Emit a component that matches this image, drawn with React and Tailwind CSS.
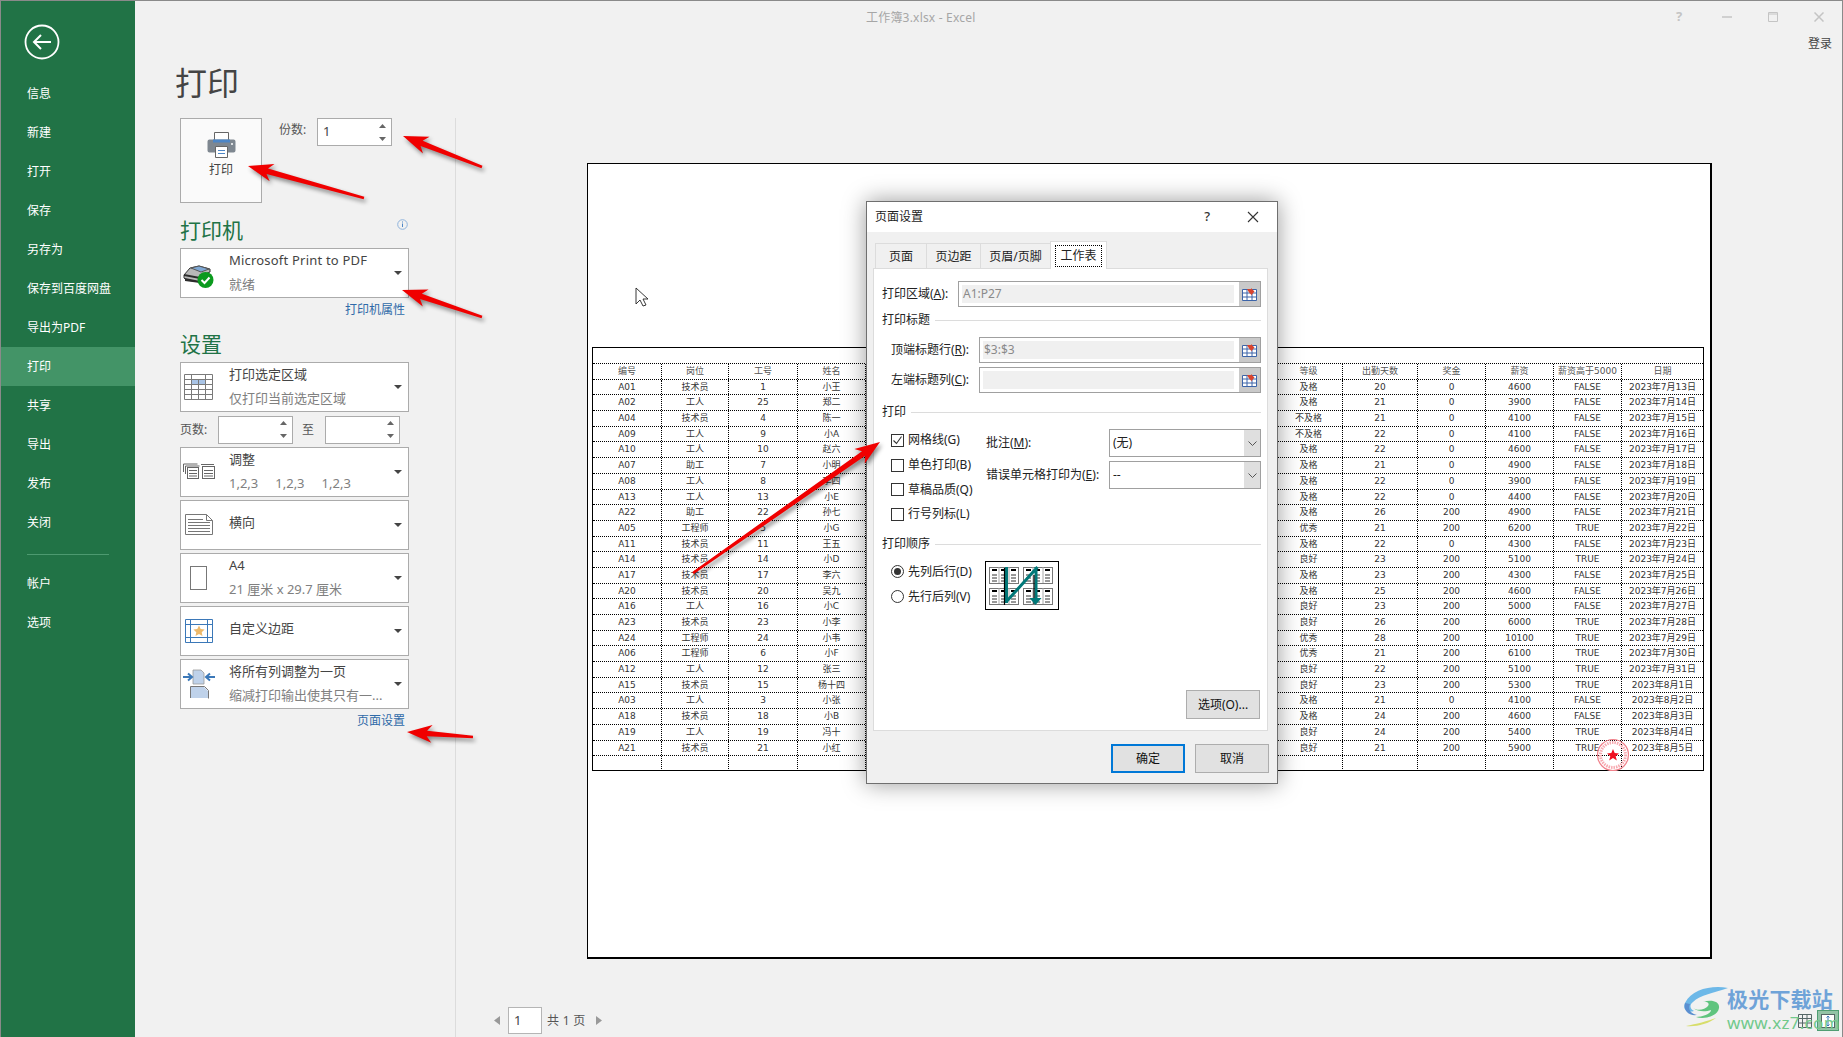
import React from 'react';

const navTop = ['信息', '新建', '打开', '保存', '另存为', '保存到百度网盘', '导出为PDF', '打印', '共享', '导出', '发布', '关闭'];
const navBottom = ['帐户', '选项'];

const sheetHead = ['编号', '岗位', '工号', '姓名', '等级', '出勤天数', '奖金', '薪资', '薪资高于5000', '日期'];
const sheetRows = [
  ['A01', '技术员', '1', '小王', '及格', '20', '0', '4600', 'FALSE', '2023年7月13日'],
  ['A02', '工人', '25', '郑二', '及格', '21', '0', '3900', 'FALSE', '2023年7月14日'],
  ['A04', '技术员', '4', '陈一', '不及格', '21', '0', '4100', 'FALSE', '2023年7月15日'],
  ['A09', '工人', '9', '小A', '不及格', '22', '0', '4100', 'FALSE', '2023年7月16日'],
  ['A10', '工人', '10', '赵六', '及格', '22', '0', '4600', 'FALSE', '2023年7月17日'],
  ['A07', '助工', '7', '小明', '及格', '21', '0', '4900', 'FALSE', '2023年7月18日'],
  ['A08', '工人', '8', '李四', '及格', '22', '0', '3900', 'FALSE', '2023年7月19日'],
  ['A13', '工人', '13', '小E', '及格', '22', '0', '4400', 'FALSE', '2023年7月20日'],
  ['A22', '助工', '22', '孙七', '及格', '26', '200', '4900', 'FALSE', '2023年7月21日'],
  ['A05', '工程师', '5', '小G', '优秀', '21', '200', '6200', 'TRUE', '2023年7月22日'],
  ['A11', '技术员', '11', '王五', '及格', '22', '0', '4300', 'FALSE', '2023年7月23日'],
  ['A14', '技术员', '14', '小D', '良好', '23', '200', '5100', 'TRUE', '2023年7月24日'],
  ['A17', '技术员', '17', '李六', '及格', '23', '200', '4300', 'FALSE', '2023年7月25日'],
  ['A20', '技术员', '20', '吴九', '及格', '25', '200', '4600', 'FALSE', '2023年7月26日'],
  ['A16', '工人', '16', '小C', '良好', '23', '200', '5000', 'FALSE', '2023年7月27日'],
  ['A23', '技术员', '23', '小李', '良好', '26', '200', '6000', 'TRUE', '2023年7月28日'],
  ['A24', '工程师', '24', '小韦', '优秀', '28', '200', '10100', 'TRUE', '2023年7月29日'],
  ['A06', '工程师', '6', '小F', '优秀', '21', '200', '6100', 'TRUE', '2023年7月30日'],
  ['A12', '工人', '12', '张三', '良好', '22', '200', '5100', 'TRUE', '2023年7月31日'],
  ['A15', '技术员', '15', '杨十四', '良好', '23', '200', '5300', 'TRUE', '2023年8月1日'],
  ['A03', '工人', '3', '小张', '及格', '21', '0', '4100', 'FALSE', '2023年8月2日'],
  ['A18', '技术员', '18', '小B', '及格', '24', '200', '4600', 'FALSE', '2023年8月3日'],
  ['A19', '工人', '19', '冯十', '良好', '24', '200', '5400', 'TRUE', '2023年8月4日'],
  ['A21', '技术员', '21', '小红', '良好', '21', '200', '5900', 'TRUE', '2023年8月5日'],
  ['', '', '', '', '', '', '', '', '', ''],
];

// red annotation arrows, tip first then tail, in page pixels
const arrows = [
  [403, 136, 482, 167],
  [248, 166, 364, 198],
  [402, 290, 482, 317],
  [407, 732, 473, 737],
  [880, 442, 693, 573],
];

const arrowPoints = ([tx, ty, ex, ey]) => {
  const len = Math.hypot(ex - tx, ey - ty);
  const ux = (ex - tx) / len;
  const uy = (ey - ty) / len;
  const nx = -uy;
  const ny = ux;
  const pt = (along, side) => `${tx + ux * along + nx * side},${ty + uy * along + ny * side}`;
  return [pt(0, 0), pt(25, 9), pt(20, 2.8), pt(len, 1.3), pt(len, -1.3), pt(20, -2.8), pt(25, -9)].join(' ');
};

const Caret = () => (
  <svg width="8" height="4" viewBox="0 0 8 4" className="flex-none">
    <path d="M0 0h8L4 4z" fill="#444" />
  </svg>
);

const Spinner = ({ value, className }) => (
  <div className={`flex h-[28px] w-[75px] flex-none items-center justify-between border border-[#ababab] bg-white pl-[5px] pr-[5px] text-[13px] text-[#444] ${className || ''}`}>
    <span>{value}</span>
    <div className="flex flex-col gap-[9px]">
      <svg width="7" height="4" viewBox="0 0 7 4"><path d="M3.5 0L7 4H0z" fill="#666" /></svg>
      <svg width="7" height="4" viewBox="0 0 7 4"><path d="M0 0h7L3.5 4z" fill="#666" /></svg>
    </div>
  </div>
);

const Picker = ({ icon, title, sub }) => (
  <div className="flex h-[50px] w-[229px] flex-none items-center border border-[#ababab] bg-white">
    <svg width="48" height="48" viewBox="0 0 48 48" fill="none" className="flex-none">{icon}</svg>
    <div className={`flex min-w-0 flex-1 flex-col ${sub ? 'gap-[6px] pb-[3px]' : 'pb-[7px]'}`}>
      <div className="whitespace-nowrap text-[13px] leading-[18px] text-[#444]">{title}</div>
      {sub && <div className="whitespace-nowrap text-[13px] leading-[18px] text-[#808080]">{sub}</div>}
    </div>
    <div className="pr-[6px]"><Caret /></div>
  </div>
);

const PrinterGlyph = (
  <>
    <path d="M3 26l6-7 9-2 11 3v3l-10 4v6L5 31l-2-2z" fill="#b8b8b8" stroke="#333" />
    <path d="M10 19l8-2 10 3-8 3z" fill="#7fa8d4" stroke="#555" />
    <path d="M3 25l16 3v2L3 27zM4 29l15 3v2L4 32z" fill="#2c2c2c" />
    <circle cx="24.5" cy="31" r="8" fill="#0b9a1e" />
    <path d="M20.500 31l3 3 5-5.500" stroke="#fff" strokeWidth="2" />
  </>
);

const TableGlyph = (
  <g stroke="#7a7a7a">
    <rect x="10.500" y="16" width="14" height="5" fill="#a9c4e6" stroke="none" />
    <path d="M3.500 11.500h28v25h-28zM3.500 16.500h28M3.500 21.500h28M3.500 26.500h28M3.500 31.500h28M10.500 11.500v25M17.500 16.500v20M24.500 11.500v25" />
  </g>
);

const CollateGlyph = (
  <g stroke="#666">
    <path d="M2.500 24v-8h14M4.500 26v-8h14" />
    <rect x="6.500" y="19.500" width="11" height="11" fill="#fff" />
    <path d="M8 22.500h8M8 25.500h8M8 28h8" />
    <path d="M20 16.500h13" />
    <rect x="21.500" y="18.500" width="12" height="12" fill="#fff" />
    <path d="M23 22.500h9M23 25.500h9M23 28h9" />
  </g>
);

const LandscapeGlyph = (
  <g stroke="#777">
    <path d="M4.500 13.500h21l6 6v14h-27z" fill="#fff" />
    <path d="M25.500 13.500v6h6M7 18.500h15M7 21.500h22M7 24.500h22M7 27.500h22M7 30.500h22" />
  </g>
);

const SheetGlyph = <rect x="9.500" y="12.500" width="16" height="23" stroke="#777" fill="#fff" />;

const MarginGlyph = (
  <g>
    <path d="M4.500 12.500h27v23h-27zM9.500 12.500v23M26.500 12.500v23M4.500 17.500h27M4.500 30.500h27" stroke="#3b78b8" />
    <path d="M18 18.500l1.700 3.600 3.900.5-2.900 2.600.8 3.900-3.500-2-3.500 2 .8-3.900-2.900-2.600 3.900-.5z" fill="#eeb96a" />
  </g>
);

const FitGlyph = (
  <g>
    <path d="M12 10h8l3 3v11H12z" fill="#bfd2ea" stroke="#999" strokeWidth="0.8" />
    <path d="M9.500 38V26.500h14l4 4v8" fill="none" stroke="#777" />
    <path d="M10 27h13l4 4v7H10z" fill="#bfd2ea" />
    <path d="M2 17h8M7 13.500l4 3.500-4 3.500M34 17h-8M29 13.500l-4 3.500 4 3.500" stroke="#3b78b8" strokeWidth="2" />
  </g>
);

const RefEdit = () => (
  <div className="flex h-full w-[21px] flex-none items-center justify-center bg-[#c9c9c9]">
    <svg width="15" height="13" viewBox="0 0 15 13" fill="none">
      <rect x=".5" y="1.500" width="14" height="11" fill="#fff" />
      <path d="M.5 1.500h14v11H.5zM.5 5h14M.5 9h14M5 1.500v11M10 1.500v11" stroke="#3c64a8" />
      <path d="M5 1h4V0l3.500 3.500L9 7.500V6.500L7 4.500z" fill="#d8442e" />
    </svg>
  </div>
);

const RefInput = ({ value }) => (
  <div className="flex h-[26px] flex-1 items-stretch border border-[#a0a0a0] bg-white">
    <div className="my-[3px] ml-[3px] mr-[5px] flex flex-1 items-center bg-[#f0f0f0] pl-[1px] text-[12px] text-[#8a8a8a]">{value}</div>
    <RefEdit />
  </div>
);

const GroupTitle = ({ children, className }) => (
  <div className={`flex h-[24px] flex-none items-center gap-[5px] pt-[2px] text-[12px] text-[#222] ${className || ''}`}>
    <span>{children}</span>
    <div className="h-px flex-1 bg-[#dcdcdc]" />
  </div>
);

const Check = ({ label, checked }) => (
  <div className="flex h-[24.7px] items-center gap-[4px] text-[12px] text-[#222]">
    <div className="flex h-[13px] w-[13px] flex-none items-center justify-center border border-[#333] bg-white">
      {checked && (
        <svg width="11" height="11" viewBox="0 0 11 11" fill="none"><path d="M1.500 5.500l3 3 5-7" stroke="#333" strokeWidth="1.100" /></svg>
      )}
    </div>
    <span className="whitespace-nowrap">{label}</span>
  </div>
);

const Radio = ({ label, checked }) => (
  <div className="flex h-[25px] items-center gap-[4px] text-[12px] text-[#222]">
    <div className="flex h-[13px] w-[13px] flex-none items-center justify-center rounded-full border border-[#333] bg-white">
      {checked && <div className="h-[7px] w-[7px] rounded-full bg-[#333]" />}
    </div>
    <span className="whitespace-nowrap">{label}</span>
  </div>
);

const SelectBox = ({ value }) => (
  <div className="flex h-[28px] w-[152px] flex-none items-stretch border border-[#a0a0a0] bg-white text-[12px] text-[#222]">
    <div className="flex flex-1 items-center pl-[3px]">{value}</div>
    <div className="flex w-[16px] items-center justify-center bg-[#dfdfdf]">
      <svg width="9" height="5" viewBox="0 0 9 5" fill="none"><path d="M.5.500l4 4 4-4" stroke="#555" /></svg>
    </div>
  </div>
);

const DialogButton = ({ children, primary }) => (
  <div className={`flex h-[29px] w-[74px] items-center justify-center bg-[#e1e1e1] text-[12px] text-[#111] ${primary ? 'border-2 border-[#0078d7]' : 'border border-[#adadad]'}`}>
    {children}
  </div>
);

const miniPage = (x, y) => (
  <g key={`${x}-${y}`} fill="none" stroke="#777">
    <rect x={x + 0.5} y={y + 0.5} width="29" height="16" />
    <path d={`M${x + 10} ${y} v16 M${x + 20} ${y} v16`} stroke="#aaa" />
    <path d={`M${x + 3} ${y + 3} h5 M${x + 12} ${y + 3} h5 M${x + 22} ${y + 3} h5`} stroke="#000" strokeWidth="2" />
    <path d={`M${x + 3} ${y + 8} h5 M${x + 12} ${y + 8} h5 M${x + 22} ${y + 8} h5 M${x + 3} ${y + 11} h5 M${x + 12} ${y + 11} h5 M${x + 22} ${y + 11} h5 M${x + 3} ${y + 14} h5 M${x + 12} ${y + 14} h5 M${x + 22} ${y + 14} h5`} stroke="#333" />
  </g>
);

const OrderPicture = () => (
  <svg width="74" height="49" viewBox="0 0 74 49" className="flex-none bg-white outline outline-1 -outline-offset-1 outline-black">
    {miniPage(4, 6)}
    {miniPage(38, 6)}
    {miniPage(4, 27)}
    {miniPage(38, 27)}
    <path d="M21.500 6v36M52.500 6L21 41M51 6v35" stroke="#007878" strokeWidth="3" fill="none" />
    <path d="M19.500 7v37M49 14v29" stroke="#000" strokeWidth="1.200" />
    <path d="M44.500 37h12l-6 7z" fill="#007878" />
  </svg>
);

const PageSetupDialog = () => (
  <div className="absolute left-[865px] top-[200px] flex h-[583px] w-[412px] flex-col border border-[#6f6f6f] bg-[#f0f0f0] shadow-[0_0_22px_rgba(0,0,0,0.4)]">
    <div className="flex h-[30px] flex-none items-center bg-white pb-[1px] pl-[8px] pr-[18px] text-[12px] text-[#222]">
      <span className="flex-1">页面设置</span>
      <span className="mr-[37px] text-[13px] font-medium text-[#333]">?</span>
      <svg width="12" height="12" viewBox="0 0 12 12" fill="none"><path d="M1 1l10 10M11 1L1 11" stroke="#333" strokeWidth="1.100" /></svg>
    </div>
    <div className="flex h-[36px] flex-none items-end pl-[8px] text-[12px] text-[#222]">
      <div className="flex h-[25px] w-[51px] items-center justify-center border-l border-t border-[#dcdcdc] pt-[1px]">页面</div>
      <div className="flex h-[25px] w-[54px] items-center justify-center border-l border-t border-[#dcdcdc] pt-[1px]">页边距</div>
      <div className="flex h-[25px] w-[70px] items-center justify-center border-l border-t border-[#dcdcdc] pt-[1px]">页眉/页脚</div>
      <div className="z-10 -mb-px flex h-[28px] w-[57px] items-center justify-center border-x border-t border-[#dcdcdc] bg-white pt-[1px]">
        <span className="border border-dotted border-black px-[4px] leading-[20px]">工作表</span>
      </div>
    </div>
    <div className="ml-[6px] flex h-[463px] w-[395px] flex-none flex-col border border-[#dcdcdc] bg-white pb-[11px] pl-[8px] pr-[6px] pt-[12px]">
      <div className="flex h-[26px] flex-none items-center text-[12px] text-[#222]">
        <span className="w-[76px] flex-none whitespace-nowrap">打印区域(<u>A</u>):</span>
        <RefInput value="A1:P27" />
      </div>
      <GroupTitle>打印标题</GroupTitle>
      <div className="mt-[6px] flex h-[26px] flex-none items-center pl-[9px] text-[12px] text-[#222]">
        <span className="w-[88px] flex-none whitespace-nowrap">顶端标题行(<u>R</u>):</span>
        <RefInput value="$3:$3" />
      </div>
      <div className="mt-[4px] flex h-[26px] flex-none items-center pl-[9px] text-[12px] text-[#222]">
        <span className="w-[88px] flex-none whitespace-nowrap">左端标题列(<u>C</u>):</span>
        <RefInput value="" />
      </div>
      <GroupTitle className="mt-[6px]">打印</GroupTitle>
      <div className="mt-[5px] flex h-[100px] flex-none">
        <div className="w-[104px] flex-none pl-[9px]">
          <Check label="网格线(G)" checked />
          <Check label="单色打印(B)" />
          <Check label="草稿品质(Q)" />
          <Check label="行号列标(L)" />
        </div>
        <div className="flex flex-1 flex-col gap-[4px] pt-px text-[12px] text-[#222]">
          <div className="flex items-center justify-between">
            <span className="whitespace-nowrap">批注(<u>M</u>):</span>
            <SelectBox value="(无)" />
          </div>
          <div className="flex items-center justify-between">
            <span className="whitespace-nowrap">错误单元格打印为(<u>E</u>):</span>
            <SelectBox value="--" />
          </div>
        </div>
      </div>
      <GroupTitle className="mt-[3px]">打印顺序</GroupTitle>
      <div className="mt-[4px] flex flex-none">
        <div className="w-[103px] flex-none pl-[9px]">
          <Radio label="先列后行(D)" checked />
          <Radio label="先行后列(V)" />
        </div>
        <div className="pt-[2px]"><OrderPicture /></div>
      </div>
      <div className="mt-auto flex justify-end pr-px">
        <DialogButton>选项(O)...</DialogButton>
      </div>
    </div>
    <div className="flex flex-1 justify-end gap-[10px] pr-[8px] pt-[13px]">
      <DialogButton primary>确定</DialogButton>
      <DialogButton>取消</DialogButton>
    </div>
  </div>
);

const SheetRow = ({ cells, head }) => (
  <div className={`grid h-[15.7px] flex-none grid-cols-[68px_67px_69px_68px_409px_68px_75px_68px_68px_68px_1fr] border-t border-dotted border-black text-center font-['DejaVu_Sans','Noto_Sans_CJK_SC',sans-serif] text-[9px] leading-[14px] ${head ? 'text-[#555]' : 'text-[#333]'}`}>
    {cells.slice(0, 4).map((c, i) => (
      <div key={i} className={`whitespace-nowrap ${i ? 'border-l border-dotted border-black' : ''}`}>{c}</div>
    ))}
    <div className="border-l border-dotted border-black" />
    {cells.slice(4).map((c, i) => (
      <div key={i} className="whitespace-nowrap border-l border-dotted border-black">{c}</div>
    ))}
  </div>
);

const PrintPreview = () => (
  <div className="h-[796px] w-[1125px] flex-none border-b-2 border-l border-r-2 border-t border-black bg-white pl-[4px] pr-[6px] pt-[183px]">
    <div className="flex h-[424px] flex-col border border-black">
      <div className="h-[15px] flex-none" />
      <SheetRow cells={sheetHead} head />
      {sheetRows.map((r, i) => <SheetRow key={i} cells={r} />)}
    </div>
  </div>
);

const Stamp = () => (
  <svg width="34" height="34" viewBox="0 0 34 34" fill="none" className="absolute left-[1595px] top-[737px]">
    <circle cx="17" cy="17" r="15.500" stroke="#f0808a" strokeWidth="1.200" />
    <circle cx="17" cy="17" r="12.500" stroke="#f7a9b0" strokeWidth="3" strokeDasharray="1.500 1" />
    <path d="M17 11l1.700 4.100 4.300.3-3.300 2.800 1.100 4.300-3.800-2.400-3.800 2.400 1.100-4.300-3.300-2.800 4.300-.3z" fill="#f01020" />
  </svg>
);

const Watermark = () => (
  <div className="absolute left-[1681px] top-[985px] flex items-start">
    <svg width="48" height="42" viewBox="0 0 48 42" fill="none" className="flex-none">
      <path d="M46 2C30-1 10 3 3 17c-3 7 3 10 9 8-4-2-5-6-1-9C18 9 32 7 46 2z" fill="#6db8e8" />
      <path d="M11 22c4 3 12 2 15-2 2-3-1-5-5-4 8-3 17-1 16 6-1 8-15 12-23 9 6 0 15-3 15-7-5 2-13 2-18-2z" fill="#5fc47e" />
      <path d="M4 40c10 1 22-2 30-8-8 3-20 6-30 8z" fill="#d7dd6a" />
      <path d="M3 17c-2 8 4 13 12 12-5-1-10-5-7-11z" fill="#5b8fd0" />
    </svg>
    <div className="-ml-[3px] flex flex-col">
      <div className="whitespace-nowrap text-[21px] font-bold leading-[26px] tracking-[0.2px] text-[#6fa3d8]">极光下载站</div>
      <div className="mt-[2px] whitespace-nowrap text-[17px] leading-[18px] tracking-[0.3px] text-[#72c98c]">www.xz7.com</div>
    </div>
  </div>
);

const ViewButtons = () => (
  <div className="absolute left-[1797px] top-[1009px] flex items-center gap-[5px]">
    <svg width="14" height="14" viewBox="0 0 14 14" fill="none">
      <path d="M.5.500h13v13H.5zM.5 4.500h13M.5 9h13M4.500.5v13M9 .5v13" stroke="#566" />
    </svg>
    <div className="flex h-[21px] w-[22px] items-center justify-center border border-[#4f9e72] bg-[#93c3a6]">
      <svg width="14" height="14" viewBox="0 0 14 14" fill="none">
        <rect x=".5" y=".5" width="13" height="13" fill="#fff" stroke="#566" />
        <path d="M7 2v10M5.500 3.500L7 2l1.500 1.500M5.500 10.500L7 12l1.500-1.500" stroke="#3b78b8" />
      </svg>
    </div>
  </div>
);

const App = () => (
  <div className="relative flex h-[1037px] w-[1843px] overflow-hidden border-x border-t border-[#8a8a8a] bg-[#f1f1f1] font-['Noto_Sans','Noto_Sans_CJK_SC',sans-serif]">
    {/* backstage nav */}
    <nav className="flex w-[134px] flex-none flex-col bg-[#217346] text-[12px] text-white">
      <div className="h-[73px] flex-none pl-[23px] pt-[23px]">
        <svg width="36" height="36" viewBox="0 0 36 36" fill="none">
          <circle cx="18" cy="18" r="16.500" stroke="#fff" strokeWidth="1.800" />
          <path d="M27 18H10M17 11l-7 7 7 7" stroke="#fff" strokeWidth="2" />
        </svg>
      </div>
      {navTop.map((t) => (
        <div key={t} className={`flex h-[39px] flex-none items-center pl-[26px] ${t === '打印' ? 'bg-[#439467]' : ''}`}>{t}</div>
      ))}
      <div className="mx-[26px] mb-[9px] mt-[12px] h-px w-[82px] flex-none bg-[#4d9a70]" />
      {navBottom.map((t) => (
        <div key={t} className="flex h-[39px] flex-none items-center pl-[26px]">{t}</div>
      ))}
    </nav>

    <div className="flex min-w-0 flex-1 flex-col">
      {/* title bar */}
      <div className="flex h-[30px] flex-none items-center pt-[4px] text-[12px] text-[#a6a6a6]">
        <span className="pl-[731px] tracking-[0.2px]">工作簿3.xlsx - Excel</span>
        <div className="mb-[2px] ml-auto flex items-center gap-[36px] pr-[18px] text-[#c4c4c4]">
          <span className="w-[10px] text-[13px] font-bold">?</span>
          <svg width="10" height="10" viewBox="0 0 10 10"><path d="M0 5h10" stroke="#c4c4c4" strokeWidth="1.500" /></svg>
          <svg width="10" height="10" viewBox="0 0 10 10" fill="none"><path d="M.5.500h9v9h-9zM0 2h10" stroke="#c4c4c4" /></svg>
          <svg width="10" height="10" viewBox="0 0 10 10"><path d="M.5.500l9 9M9.500.5l-9 9" stroke="#c4c4c4" strokeWidth="1.500" /></svg>
        </div>
      </div>

      <div className="flex min-h-0 flex-1">
        {/* print settings column */}
        <div className="flex w-[321px] flex-none flex-col">
          <h1 className="h-[87px] flex-none pl-[40px] pt-[32px] text-[32px] font-normal leading-[40px] text-[#444]">打印</h1>
          <div className="flex flex-1 flex-col border-r border-[#dcdcdc] pl-[45px]">
            <div className="flex h-[85px] flex-none items-start">
              <div className="flex h-[85px] w-[82px] flex-none flex-col items-center border border-[#ababab] bg-[#fafafa] pt-[13px]">
                <svg width="29" height="26" viewBox="0 0 29 26" fill="none">
                  <path d="M7.500.5h14v8h-14z" fill="#fff" stroke="#666" />
                  <path d="M2.500 7.500h24a2 2 0 0 1 2 2v9a2 2 0 0 1-2 2h-24a2 2 0 0 1-2-2v-9a2 2 0 0 1 2-2z" fill="#7e8790" />
                  <rect x="6" y="7.500" width="17" height="3" fill="#4d86c6" />
                  <path d="M8.500 14.500h12v11h-12z" fill="#fff" stroke="#666" />
                  <path d="M11 18.500h7M11 21.500h7" stroke="#4d86c6" />
                  <circle cx="25" cy="12" r="1" fill="#fff" />
                </svg>
                <span className="mt-[4px] text-[12px] leading-[16px] text-[#444]">打印</span>
              </div>
              <span className="ml-[17px] mt-[4px] w-[38px] text-[12px] leading-[16px] text-[#555]">份数:</span>
              <Spinner value="1" />
            </div>
            <div className="flex h-[45px] w-[229px] flex-none justify-between pt-[15px]">
              <h2 className="text-[21px] font-normal leading-[24px] text-[#217346]">打印机</h2>
              <svg width="11" height="11" viewBox="0 0 11 11" fill="none" className="mr-[1px] mt-[1px]">
                <circle cx="5.500" cy="5.500" r="4.800" stroke="#8fb3dc" />
                <path d="M5.500 4.500v3.500M5.500 2.500v1" stroke="#4d86c6" />
              </svg>
            </div>
            <Picker icon={PrinterGlyph} title={<span className="tracking-[0.2px]">Microsoft Print to PDF</span>} sub="就绪" />
            <div className="h-[22px] w-[225px] flex-none pt-px text-right text-[12px] leading-[22px] text-[#2f6aa8]">打印机属性</div>
            <h2 className="h-[42px] flex-none pt-[12px] text-[21px] font-normal leading-[24px] text-[#217346]">设置</h2>
            <Picker icon={TableGlyph} title="打印选定区域" sub="仅打印当前选定区域" />
            <div className="flex h-[35px] w-[229px] flex-none items-center text-[12px] text-[#555]">
              <span className="w-[38px] flex-none">页数:</span>
              <Spinner value="" />
              <span className="ml-[9px] w-[23px] flex-none">至</span>
              <Spinner value="" />
            </div>
            <div className="flex flex-col gap-[3px]">
              <Picker icon={CollateGlyph} title="调整" sub={<span className="flex gap-[17px]"><span>1,2,3</span><span>1,2,3</span><span>1,2,3</span></span>} />
              <Picker icon={LandscapeGlyph} title="横向" />
              <Picker icon={SheetGlyph} title="A4" sub="21 厘米 x 29.7 厘米" />
              <Picker icon={MarginGlyph} title="自定义边距" />
              <Picker icon={FitGlyph} title="将所有列调整为一页" sub="缩减打印输出使其只有一..." />
            </div>
            <div className="h-[22px] w-[225px] flex-none pt-px text-right text-[12px] leading-[22px] text-[#2f6aa8]">页面设置</div>
          </div>
        </div>

        {/* preview column */}
        <div className="flex min-w-0 flex-1 flex-col">
          <div className="h-[24px] flex-none pr-[10px] text-right text-[12px] leading-[26px] text-[#444]">登录</div>
          <div className="mt-[108px] flex-none pl-[131px]">
            <PrintPreview />
          </div>
          <div className="mt-[48px] flex h-[27px] flex-none items-center pl-[38px] text-[12px] text-[#555]">
            <svg width="6" height="9" viewBox="0 0 6 9" className="flex-none"><path d="M6 0v9L0 4.500z" fill="#999" /></svg>
            <div className="ml-[8px] flex h-[27px] w-[34px] flex-none items-center border border-[#b5b5b5] bg-white pl-[5px] text-[13px] text-[#444]">1</div>
            <span className="ml-[5px] w-[49px] flex-none whitespace-pre tracking-[0.3px]">共 1 页</span>
            <svg width="6" height="9" viewBox="0 0 6 9" className="flex-none"><path d="M0 0v9l6-4.500z" fill="#999" /></svg>
          </div>
        </div>
      </div>
    </div>

    <Stamp />
    <PageSetupDialog />

    {/* mouse cursor */}
    <svg width="14" height="21" viewBox="0 0 14 21" className="absolute left-[634px] top-[286px]">
      <path d="M1 1v16l4-4 3 6 3-1-3-6h5z" fill="#fff" stroke="#222" strokeWidth="0.9" />
    </svg>

    <svg width="1843" height="1037" className="pointer-events-none absolute left-[-1px] top-[-1px] drop-shadow-[2px_3px_2px_rgba(0,0,0,0.45)]">
      {arrows.map((a, i) => <polygon key={i} points={arrowPoints(a)} fill="#f00000" />)}
    </svg>

    <ViewButtons />
    <Watermark />
  </div>
);

export default App;
